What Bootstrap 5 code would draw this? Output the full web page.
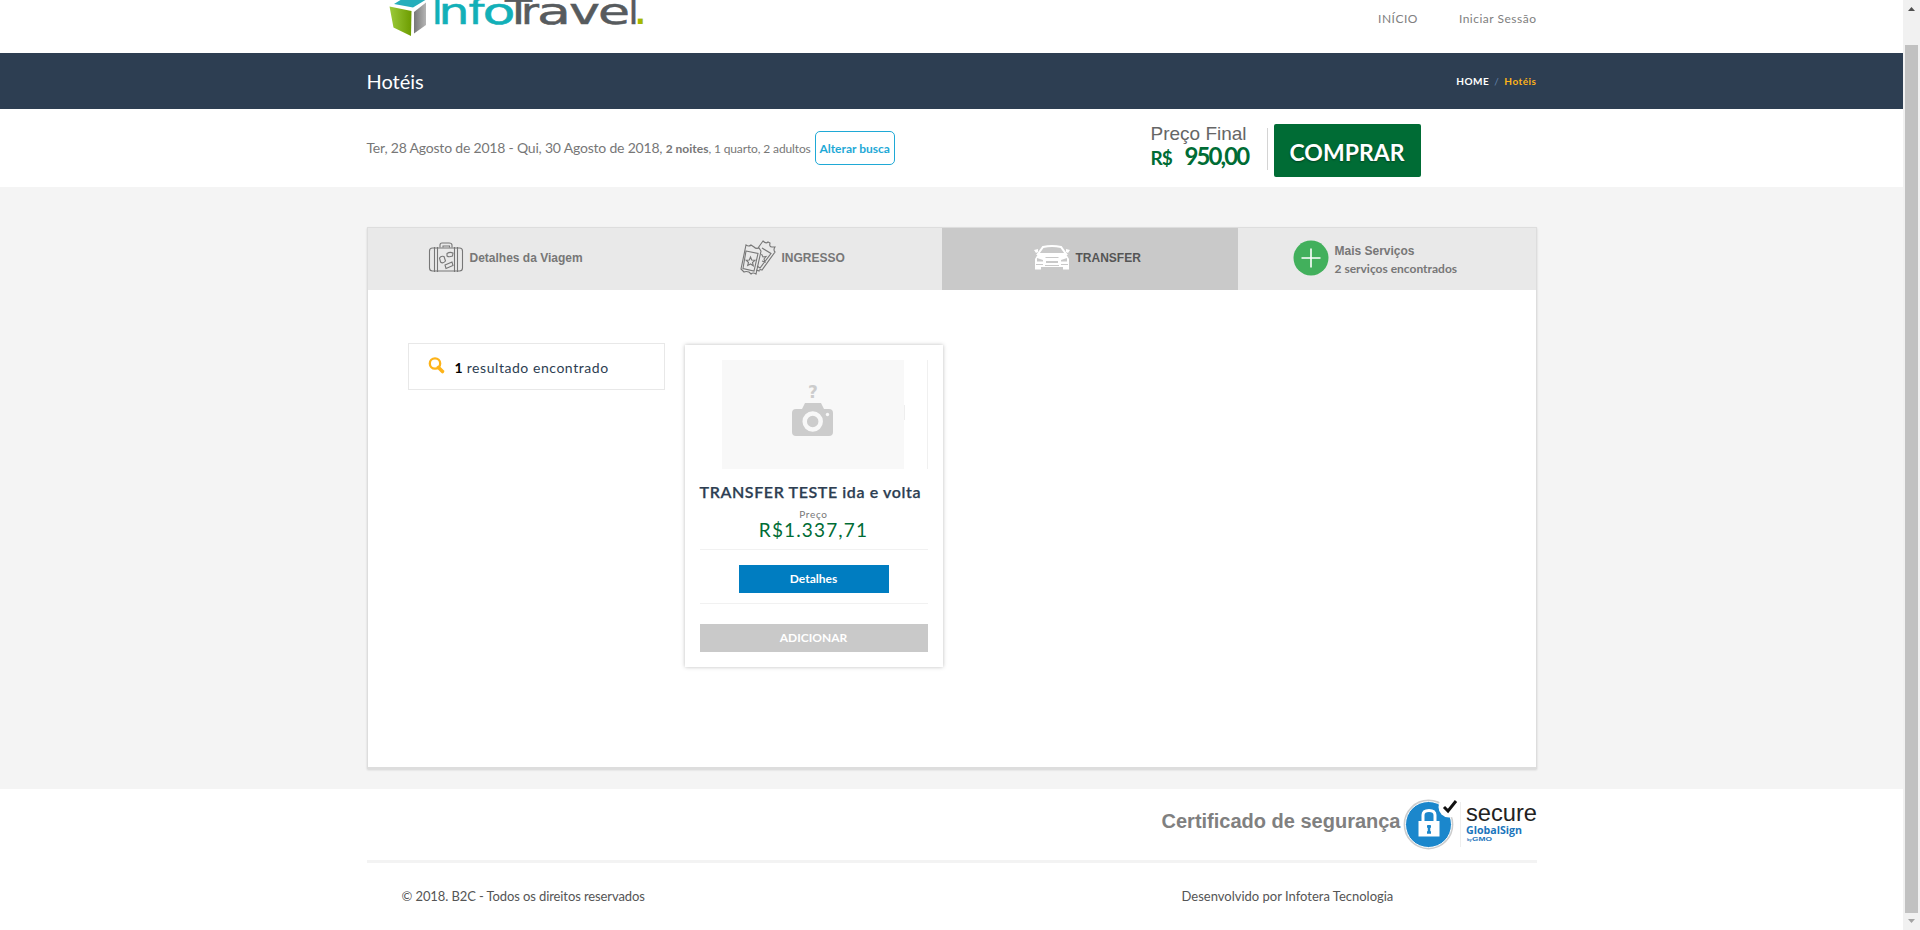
<!DOCTYPE html>
<html lang="pt-BR">
<head>
<meta charset="utf-8">
<title>InfoTravel - Hotéis</title>
<meta name="viewport" content="width=device-width, initial-scale=1">
<link href="https://cdn.jsdelivr.net/npm/bootstrap@5.3.0/dist/css/bootstrap.min.css" rel="stylesheet">
<style>
body{font-family:Lato,"Liberation Sans",sans-serif;font-size:13px;line-height:20px;color:#777;width:1920px;height:930px;overflow:hidden;background:#fff}
.wrap{width:1170px;margin-left:auto;margin-right:auto}
.page{width:1903px}
.arial{font-family:"Liberation Sans",Arial,sans-serif}
.t{white-space:pre;display:inline-block}
a{text-decoration:none;color:inherit}
.top-bar{height:53px}
.top-links{padding-top:9px;gap:41px;font-size:12px;letter-spacing:.5px;color:#808080}
.title-bar{height:56px;background:#2d3e52}
.title-bar h1{font-size:20px;line-height:24px;color:#fff;font-weight:400}
.crumbs{font-size:10px;font-weight:700;color:#fff;gap:5px;line-height:16px;letter-spacing:.5px}
.search-bar{height:78px}
.dates{font-size:14px;letter-spacing:-.2px;color:#777}
.dates .sm{font-size:12px;letter-spacing:0}
.dates .d3{letter-spacing:-.13px}
.btn-change{border:1px solid #1fa9d6;border-radius:5px;color:#1fa9d6;width:80px;height:34px;font-size:12px;font-weight:700;padding:0;line-height:34px;margin-left:4px}
.btn-buy{width:147px;height:53px;border-radius:2px;background:#006c35;color:#fff;font-size:23px;font-weight:700;line-height:55px;padding:0;text-shadow:0 1px 2px #0006}
.vline{width:1px;height:42px;background:#d4d4d4}
.content{background:#f4f4f4;height:602px;padding-top:40px}
.panel{height:542px;background:#fff;border:1px solid #ddd;border-bottom:2px solid #ddd;box-shadow:0 1px 2px #0002}
.tabs{height:62px;background:#e9e9e9;font-size:12px;font-weight:700;color:#777}
.tabs>div{padding-bottom:2px}
.tab-on{background:#c9c9c9;color:#555}
.results{width:257px;height:47px;border:1px solid #e8e8e8;color:#2d3e52;font-size:14px}
.offer{width:258px;height:322px;box-shadow:0 0 4px #0004;padding:15px;background:#fff}
.photo{height:109px;border-right:1px solid #f0f0f0}
.offer h2{font-size:16px;font-weight:600;line-height:20px;letter-spacing:.6px;color:#2d3e52;-webkit-text-stroke:.25px #2d3e52}
.thin{height:1px;background:#f1f1f1}
.btn-flat{height:28px;border-radius:0;color:#fff;font-size:12px;font-weight:700;padding:0;line-height:28px;border:0}
.seal-row{height:71px}
.seal-row .lbl{font-size:20px;font-weight:700;color:#808080;line-height:24px}
.foot-line{height:3px;background:#f3f3f3}
.foot-text{font-size:13px;color:#555}
.sbar{width:17px;background:#f1f1f1}
.thumb{height:868px;width:13px;background:#c1c1c1}
</style>
</head>
<body class="d-flex">
<div class="page">
<header class="top-bar overflow-hidden"><div class="wrap d-flex justify-content-between">
<svg width="290" height="53" viewBox="367 0 290 53">
<defs><linearGradient id="g1"><stop stop-color="#9ccb3b"/><stop offset="1" stop-color="#6d9c00"/></linearGradient><linearGradient id="g2"><stop stop-color="#777"/><stop offset="1" stop-color="#b5b5b5"/></linearGradient></defs>
<path d="M394 4L407-4L427-1L413 7.500Z" fill="#25aebb"/><path d="M389.500 6.500L411.500 11L411 36L393.500 27.500Z" fill="url(#g1)"/><path d="M414 12L426 2.500V25L414 33.500Z" fill="url(#g2)"/>
<g font-family="DejaVu Sans" font-size="36" fill="#12b0b8" stroke="#12b0b8" stroke-width=".5"><text x="432" y="24">I</text><text x="438.500" y="24" textLength="31" lengthAdjust="spacingAndGlyphs">n</text><text x="468.500" y="24" textLength="16" lengthAdjust="spacingAndGlyphs">f</text><text x="482.500" y="24" textLength="33" lengthAdjust="spacingAndGlyphs">o</text></g>
<g font-family="DejaVu Sans" font-size="36" fill="#575b5e" stroke="#575b5e" stroke-width=".5"><text x="505" y="24" font-size="33" textLength="27" lengthAdjust="spacingAndGlyphs">T</text><text x="521" y="24" textLength="18" lengthAdjust="spacingAndGlyphs">r</text><text x="537" y="24" textLength="34" lengthAdjust="spacingAndGlyphs">a</text><text x="569" y="24" textLength="31" lengthAdjust="spacingAndGlyphs">v</text><text x="598" y="24" textLength="32" lengthAdjust="spacingAndGlyphs">e</text><text x="628.500" y="24">l</text></g><text x="635" y="24" font-family="DejaVu Sans" font-weight="700" font-size="28" fill="#a5b800">.</text>
</svg>
<nav class="top-links d-flex"><a class="t" href="#">INÍCIO</a><a class="t" href="#">Iniciar Sessão</a></nav>
</div></header>
<div class="title-bar"><div class="wrap h-100 d-flex align-items-center justify-content-between"><h1 class="t m-0">Hotéis</h1>
<div class="crumbs d-flex"><span class="t">HOME</span><span class="t fw-normal" style="color:#6485ac">/</span><span class="t" style="color:#fdb319">Hotéis</span></div></div></div>
<div class="search-bar"><div class="wrap h-100 d-flex">
<div class="dates d-flex align-items-start" style="width:784px;padding-top:22px"><div class="d-flex align-items-baseline" style="padding-top:7px"><span class="t d1">Ter, 28 Agosto de 2018 - Qui, 30 Agosto de 2018, </span><b class="t sm d2">2 noites</b><span class="t sm d3">, 1 quarto, 2 adultos</span></div><button class="btn btn-change"><span class="t">Alterar busca</span></button></div>
<div style="width:116px;padding-top:14px"><div class="t arial p1" style="font-size:19px;color:#666;line-height:22px">Preço Final</div><div class="d-flex align-items-baseline" style="color:#006c35;line-height:22px;font-weight:700"><span class="t p2" style="font-size:19px;letter-spacing:-1px;width:34px">R$</span><span class="t p3" style="font-size:24px;letter-spacing:-1.900px">950,00</span></div></div>
<div class="vline" style="margin-top:19px"></div><button class="btn btn-buy" style="margin:15px 0 0 6px"><span class="t">COMPRAR</span></button>
</div></div>
<main class="content"><div class="wrap panel">
<div class="tabs arial d-flex">
<div class="d-flex align-items-center" style="width:313px;padding-left:60px"><svg width="37" height="34" fill="none" stroke="#777" stroke-width="1.100"><rect x="1.500" y="7" width="33" height="23" rx="3"/><path d="M6.500 6V31M9.500 6V31M26.500 6V31M29.500 6V31M12 6.500V4Q12 2 14 2H21Q24 2 24 4V6.500M15 6.500V5H21.500V6.500"/><path d="M11.500 17Q13 14.500 16 15.500L17.500 20Q15 23 12.500 21ZM19 12.500Q22 10.500 25 12L24.500 15Q21 16.500 19 15Z"/><path d="M17 24L24 21L25 24.500L18 27.500Z"/></svg><span class="t" style="margin-left:5px">Detalhes da Viagem</span></div>
<div class="d-flex align-items-center" style="width:261px;padding-left:59px"><svg width="37" height="36" viewBox="0 0 37 36" fill="none" stroke="#777" stroke-width="1.100"><path d="M18 8L23 1Q26 4 28 2L30 3Q29 7 32 7L35 7Q33 10 35 12L22 30Q19 29 19 31L16 30"/><path d="M22 8L31 13.500L20 28L17 26M21.500 14l1.500 3 3-.5-2 2.500 1 3-3-1"/><path d="M6 5Q9 7 11 5L14 7Q16 9 19 8L21 11L16 34Q13 32 11 34L9 32Q6 31 4 32L1 29Z"/><path d="M6 11L18 13.500L14 31L3 28.500Z"/><path d="M10.500 17l1.200 3 3.300.3-2.500 2.200.8 3.300-2.800-1.800-2.800 1.500.8-3-2.300-2.300 3.100-.2z"/></svg><span class="t" style="margin-left:5px">INGRESSO</span></div>
<div class="tab-on d-flex align-items-center" style="width:296px;padding-left:92px"><svg width="36" height="26" viewBox="0 0 36 26" fill="#fff"><path d="M9 2Q18 0 27 2L32 9H4Z" fill="none" stroke="#fff" stroke-width="2"/><path d="M0 5L4 4V7L2 8ZM36 5L32 4V7L34 8ZM4 9H32L35 14V24.500H29V22H7V24.500H1V14Z"/><path d="M3 13L9 15V16.500H3ZM33 13L27 15V16.500H33ZM11 12H25L24 13H12ZM12 16H24V18H12ZM2 19H9V20H2ZM27 19H34V20H27ZM11 20H25V21H11Z" fill="#c9c9c9"/></svg><span class="t" style="margin-left:6px">TRANSFER</span></div>
<div class="d-flex align-items-center" style="padding-left:55px"><svg width="36" height="36"><circle cx="18" cy="18" r="17.500" fill="#42b05c"/><path d="M18 8.500V27.500M8.500 18H27.500" stroke="#fff" stroke-width="1.600"/></svg><div style="margin-left:6px;line-height:18px;padding-top:3px"><div class="t d-block">Mais Serviços</div><div class="d-block"><span class="t e2" style="font-family:Lato">2 serviços encontrados</span></div></div></div>
</div>
<div class="d-flex" style="padding:53px 0 0 40px">
<div class="results d-flex align-items-center"><svg width="18" height="18" style="margin:-1px 0 0 19px"><circle cx="7" cy="6.500" r="5.200" fill="none" stroke="#fdb319" stroke-width="2.300"/><path d="M10.500 10.500L14.500 14.500" stroke="#fdb319" stroke-width="3.600" stroke-linecap="round"/></svg><span style="margin-left:9px;padding-top:2px;white-space:pre"><b class="text-black">1</b><span class="t r" style="letter-spacing:.55px"> resultado encontrado</span></span></div>
<div class="offer" style="margin:2px 0 0 20px">
<div class="photo"><svg class="d-block" width="228" height="109"><path d="M22 0H204V109H22Z" fill="#f8f8f8"/><path d="M204.500 45V60" stroke="#eee"/><text x="113" y="38" text-anchor="middle" font-family="DejaVu Sans" font-weight="700" font-size="17" fill="#ccc">?</text><path d="M96 49H102L105 43H121L124 49H129Q133 49 133 53V72Q133 76 129 76H96Q92 76 92 72V53Q92 49 96 49Z" fill="#ccc"/><circle cx="112.700" cy="61.500" r="8" fill="#ccc" stroke="#f8f8f8" stroke-width="4.500"/><circle cx="127.500" cy="54.500" r="1.700" fill="#f8f8f8"/></svg></div>
<h2 class="t m-0" style="margin-top:13px!important">TRANSFER TESTE ida e volta</h2>
<div class="text-center" style="line-height:14px;height:13px;margin-top:3px"><span class="t q1" style="font-size:10px;letter-spacing:.7px">Preço</span></div>
<div class="text-center" style="line-height:20px;height:20px;margin-top:1px;color:#006c35"><span class="t q2" style="font-size:19px;letter-spacing:1.150px">R$1.337,71</span></div>
<div class="thin" style="margin-top:9px"></div>
<button class="btn btn-flat d-block mx-auto" style="width:150px;background:#007dc1;margin-top:15px"><span class="t">Detalhes</span></button>
<div class="thin" style="margin-top:10px"></div>
<button class="btn btn-flat d-block w-100" style="background:#c9c9c9;margin-top:20px"><span class="t">ADICIONAR</span></button>
</div></div>
</div></main>
<footer class="wrap">
<div class="seal-row d-flex justify-content-end"><span class="t arial lbl" style="margin-top:20px">Certificado de segurança</span>
<svg width="135" height="58" viewBox="1402 794 135 58" style="margin-top:5px;margin-left:1px"><circle cx="1428.500" cy="824.500" r="24" fill="#1b87cc" stroke="#ccc" stroke-width="1.800"/><circle cx="1428.500" cy="824.500" r="23" fill="none" stroke="#fff"/><circle cx="1449" cy="807" r="10.500" fill="#fff"/><path d="M1444 807l4 4 8-10" fill="none" stroke="#111" stroke-width="3"/><path d="M1418.500 821H1439.500V836.500H1418.500Z" fill="#fff"/><path d="M1423 822V815Q1423 810.500 1429 810.500T1435 815V822" fill="none" stroke="#fff" stroke-width="3"/><path d="M1429 825V833M1427 826.500H1431M1427 832.500H1431" stroke="#1b87cc" stroke-width="2.500"/><path d="M1460.500 802V847" stroke="#eee"/><text x="1466" y="821" font-family="Liberation Sans" font-size="24" fill="#222" textLength="71" lengthAdjust="spacingAndGlyphs">secure</text><text x="1466" y="834" font-family="Open Sans" font-weight="700" font-size="10" fill="#1a75bc" textLength="56" lengthAdjust="spacingAndGlyphs">GlobalSign</text><text x="1467" y="841" font-family="Open Sans" font-size="4" font-weight="700" fill="#1a75bc">by</text><text x="1472" y="841" font-family="Liberation Sans" font-weight="700" font-size="5.500" fill="#1a75bc" textLength="20" lengthAdjust="spacingAndGlyphs">GMO</text></svg></div>
<div class="foot-line"></div>
<div class="foot-text d-flex" style="padding:23px 0 0 35px"><div style="width:780px"><span class="t" style="letter-spacing:-.1px">© 2018. B2C - Todos os direitos reservados</span></div><span class="t">Desenvolvido por Infotera Tecnologia</span></div>
</footer>
</div>
<aside class="sbar d-flex flex-column align-items-center"><svg width="17" height="45"><path d="M5 11L8.500 7L12 11Z" fill="#505050"/></svg><div class="thumb"></div><svg width="17" height="17"><path d="M5 6L8.500 10L12 6Z" fill="#a3a3a3"/></svg></aside>
<script src="https://cdn.jsdelivr.net/npm/bootstrap@5.3.0/dist/js/bootstrap.bundle.min.js"></script>
</body>
</html>
